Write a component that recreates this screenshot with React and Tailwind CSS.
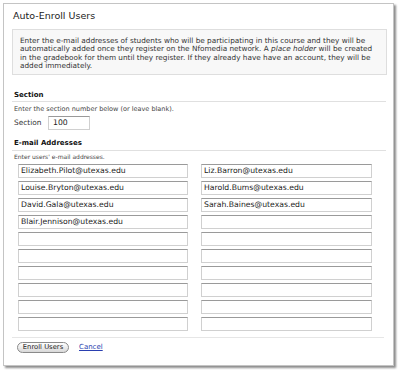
export default function App() {
  const left = [
    "Elizabeth.Pilot@utexas.edu",
    "Louise.Bryton@utexas.edu",
    "David.Gala@utexas.edu",
    "Blair.Jennison@utexas.edu",
    "", "", "", "", "", "",
  ];
  const right = [
    "Liz.Barron@utexas.edu",
    "Harold.Bums@utexas.edu",
    "Sarah.Baines@utexas.edu",
    "", "", "", "", "", "", "",
  ];
  const font = { fontFamily: '"DejaVu Sans", Verdana, sans-serif' };
  const Field = ({ v }) => (
    <div className="h-[14px] bg-white border border-[#d0d0d0] border-t-[#9a9a9a] pl-[2px] flex items-center text-[7.7px] text-[#222] leading-none overflow-hidden whitespace-nowrap">
      {v}
    </div>
  );
  const cells = [];
  left.forEach((l, i) => {
    cells.push(<Field key={"l" + i} v={l} />);
    cells.push(<Field key={"r" + i} v={right[i]} />);
  });
  return (
    <div className="w-[400px] h-[374px] bg-white pt-[3px] pl-[3px]" style={font}>
      <div className="w-[391px] h-[363px] border border-[#c4c4c4] bg-white shadow-[2px_2px_2px_rgba(0,0,0,0.45)] flex flex-col">
        <div className="h-[25px] flex items-center pl-[9px] text-[9.5px] text-[#222]">Auto-Enroll Users</div>
        <div className="mx-[8px] mr-[6px] h-[46px] bg-[#f8f8f8] border border-[#dedede] px-[7px] pt-[7px] text-[7.3px] leading-[8.3px] text-[#333] whitespace-nowrap overflow-hidden">
          <div>Enter the e-mail addresses of students who will be participating in this course and they will be</div>
          <div>automatically added once they register on the Nfomedia network. A <i>place holder</i> will be created</div>
          <div>in the gradebook for them until they register. If they already have have an account, they will be</div>
          <div>added immediately.</div>
        </div>
        <div className="mx-[8px] mr-[7px] mt-[14px] h-[13px] border-b border-[#e0e0e0] flex items-center pl-[2px] text-[7px] font-bold text-[#111]">Section</div>
        <div className="mt-[3px] pl-[10px] text-[6.5px] leading-[8px] text-[#444] whitespace-nowrap">Enter the section number below (or leave blank).</div>
        <div className="mt-[3px] pl-[10px] flex items-center h-[14px]">
          <span className="text-[7.4px] text-[#333] w-[34px]">Section</span>
          <div className="w-[42px] h-[14px] border border-[#d0d0d0] border-t-[#9a9a9a] pl-[4px] flex items-center text-[7.7px] text-[#222]">100</div>
        </div>
        <div className="mx-[8px] mr-[7px] mt-[7px] h-[14px] border-b border-[#e0e0e0] flex items-center pl-[2px] text-[7px] font-bold text-[#111]">E-mail Addresses</div>
        <div className="mt-[2px] pl-[10px] text-[6px] leading-[8px] text-[#444]">Enter users' e-mail addresses.</div>
        <div className="mt-[3px] ml-[14px] w-[354px] grid grid-cols-[170px_171px] gap-x-[13px] gap-y-[3px]">
          {cells}
        </div>
        <div className="mx-[8px] mr-[9px] mt-[6px] border-t border-[#e6e6e6]" />
        <div className="mt-[4px] pl-[13px] flex items-center gap-[10px]">
          <div className="h-[11px] w-[52px] rounded-full border border-[#8a8a8a] bg-gradient-to-b from-white to-[#d8d8d8] flex items-center justify-center text-[6.8px] text-[#222] leading-none">Enroll Users</div>
          <span className="text-[7px] text-[#2a3fb0] underline">Cancel</span>
        </div>
      </div>
    </div>
  );
}
